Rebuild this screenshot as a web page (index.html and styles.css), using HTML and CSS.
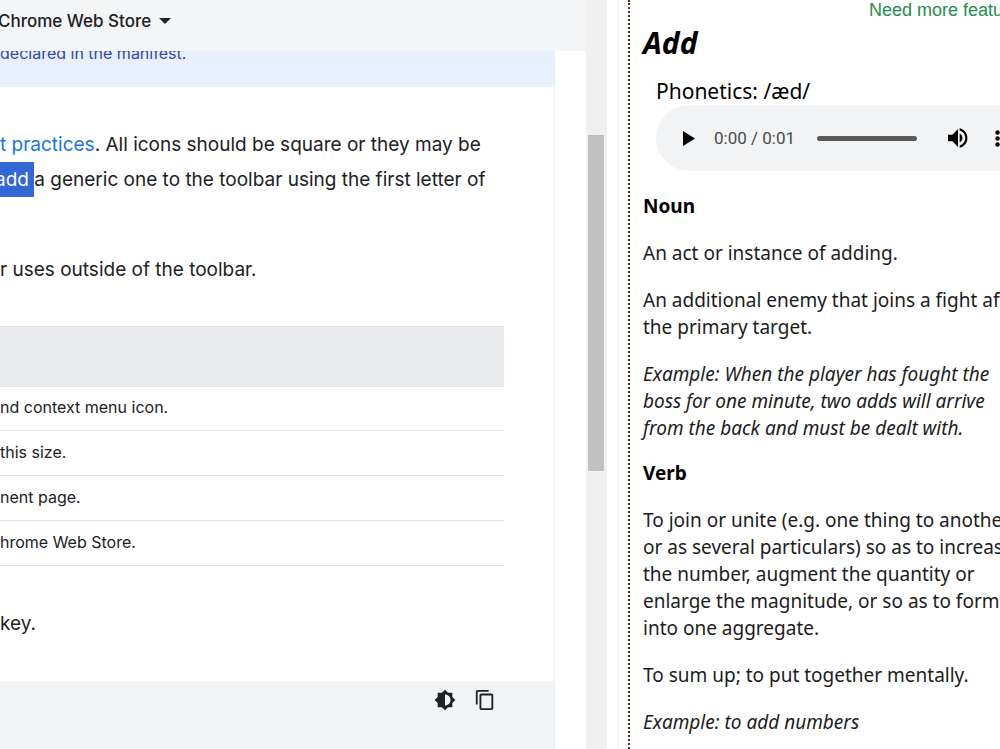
FILE: index.html
```html
<!DOCTYPE html>
<html lang="en">
<head>
<meta charset="utf-8">
<title>Dictionary side panel</title>
<link rel="stylesheet" href="styles.css">
</head>
<body>
<div class="window">
  <div class="browser">
    <nav class="topbar"><button class="menu" type="button">Chrome Web Store
      <svg class="caret" viewBox="0 0 12 6" aria-hidden="true"><path d="M0 0h12L6 6z"/></svg></button></nav>
    <main class="article">
      <p class="note">declared in the manifest.</p>
      <p class="prose"><a href="#practices">t practices</a>. All icons should be square or they may be<br><mark>add </mark>a generic one to the toolbar using the first letter of</p>
      <p class="prose uses">r uses outside of the toolbar.</p>
      <table class="sizes">
        <thead><tr><th scope="col" aria-label="Icon use"></th></tr></thead>
        <tbody>
          <tr><td>nd context menu icon.</td></tr>
          <tr><td>this size.</td></tr>
          <tr><td>nent page.</td></tr>
          <tr><td>hrome Web Store.</td></tr>
        </tbody>
      </table>
      <p class="prose">key.</p>
      <div class="code">
        <button class="tool" type="button" aria-label="Toggle dark code theme"><svg viewBox="0 0 24 24"><path d="M20 15.31 23.31 12 20 8.69V4h-4.69L12 .69 8.69 4H4v4.69L.69 12 4 15.31V20h4.69L12 23.31 15.31 20H20zM12 18V6c3.31 0 6 2.69 6 6s-2.69 6-6 6z"/></svg></button>
        <button class="tool" type="button" aria-label="Copy code sample"><svg viewBox="0 0 24 24"><path d="M16 1H4c-1.100 0-2 .9-2 2v14h2V3h12V1zm3 4H8c-1.100 0-2 .9-2 2v14c0 1.100.9 2 2 2h11c1.100 0 2-.9 2-2V7c0-1.100-.9-2-2-2zm0 16H8V7h11v14z"/></svg></button>
      </div>
    </main>
  </div>
  <div class="scrollbar"><div class="thumb"></div></div>
  <div class="gutter"></div>
  <aside class="panel">
    <a class="more" href="#features">Need more features?</a>
    <h1>Add</h1>
    <div class="sound">
      <p class="phonetics">Phonetics: /æd/</p>
      <div class="player">
        <button class="play" type="button" aria-label="Play"><svg viewBox="0 0 12 15"><path d="M0 0 12 7.500 0 15z"/></svg></button>
        <span class="time">0:00 / 0:01</span>
        <input class="seek" type="range" min="0" max="1" value="0" aria-label="Position">
        <button class="volume" type="button" aria-label="Mute"><svg viewBox="3 3 18 18"><path d="M3 9v6h4l5 5V4L7 9H3zm10.500-1.030v8.050c1.480-.73 2.500-2.250 2.500-4.020s-1.020-3.290-2.500-4.030zM13.500 3.230v2.060c2.890.86 5 3.540 5 6.710s-2.110 5.850-5 6.710v2.060c4.010-.91 7-4.490 7-8.770s-2.990-7.860-7-8.770z"/></svg></button>
        <button class="options" type="button" aria-label="More options"><svg viewBox="0 0 5 17"><circle cx="2.500" cy="2.500" r="2.200"/><circle cx="2.500" cy="8.500" r="2.200"/><circle cx="2.500" cy="14.500" r="2.200"/></svg></button>
      </div>
    </div>
    <section>
      <h2>Noun</h2>
      <p>An act or instance of adding.</p>
      <p>An additional enemy that joins a fight after<br>the primary target.</p>
      <p class="example">Example: When the player has fought the<br>boss for one minute, two adds will arrive<br>from the back and must be dealt with.</p>
    </section>
    <section>
      <h2>Verb</h2>
      <p>To join or unite (e.g. one thing to another,<br>or as several particulars) so as to increase<br>the number, augment the quantity or<br>enlarge the magnitude, or so as to form<br>into one aggregate.</p>
      <p>To sum up; to put together mentally.</p>
      <p class="example">Example: to add numbers</p>
    </section>
  </aside>
</div>
</body>
</html>
```
FILE: styles.css
```css
* { box-sizing: border-box; }
body, p, h1, h2 { margin: 0; }
body { background: #fff; overflow: hidden; }
button { display: flex; align-items: center; border: 0; padding: 0; background: none; color: inherit; font: inherit; flex: none; }
svg { display: block; fill: currentColor; }
a { text-decoration: none; }

.window { display: flex; height: 100vh; overflow: hidden; }

.browser { flex: 1; min-width: 0; overflow: hidden; display: flex; flex-direction: column; font-family: Inter, "Open Sans", sans-serif; color: #202124; white-space: nowrap; }
.topbar { position: relative; z-index: 1; flex: none; padding: 8px 0; background: #f4f5f6; }
.menu { height: 35px; gap: 8px; margin-left: -2px; padding-bottom: 10px; font-size: 17px; font-weight: 500; }
.caret { width: 12px; height: 6px; }

.article { flex: 1; display: flex; flex-direction: column; margin-right: 31px; border-right: 1px solid #e8f0fe; }
.note { flex: none; margin-top: -14px; padding-bottom: 18px; background: #e8f0fe; color: #3348a5; font-size: 16px; line-height: 32px; }
.prose { padding-top: 40px; font-size: 19px; line-height: 35px; }
.prose a { color: #1a73e8; }
.prose mark { display: inline-block; margin-left: -5px; background: #3367d6; color: #fff; white-space: pre; }
.uses { padding: 55px 0 39px; }

.sizes { width: calc(100% - 50px); border-collapse: collapse; font-size: 16px; }
.sizes th { height: 60px; padding: 0; background: #e8eaed; border-top: 1px solid #e0e1e4; }
.sizes td { height: 45px; padding: 0 0 3px; border-bottom: 1px solid #e3e4e6; }
.sizes tbody tr:first-child td { height: 44px; border-top: 1px solid #e0e1e4; }

.code { flex: 1; display: flex; justify-content: flex-end; align-items: flex-start; gap: 18px; margin-top: 40px; padding: 8px 58px 0 0; background: #f1f3f4; }
.tool svg { width: 22px; height: 22px; }

.scrollbar { flex: none; width: 21px; padding: 135px 3px 0 2px; background: #f0f0f0; }
.thumb { height: 336px; background: #c1c1c1; }
.gutter { flex: none; width: 21px; padding-left: 11px; }
.gutter::before { content: ""; display: block; width: 1px; height: 100%; background: #f0f3fd; }

.panel { flex: none; width: 372px; overflow: hidden; padding-left: 13px; border-left: 2px dotted #6e2020; font-family: "Noto Sans", sans-serif; font-size: 19px; line-height: 27px; color: #1c1c1c; white-space: nowrap; }
.more { display: block; height: 20px; margin-left: 226px; color: #1e8e4e; font-family: "Liberation Sans", sans-serif; font-size: 18px; line-height: 20px; }
h1 { padding-top: 3px; color: #000; font-size: 30px; font-style: italic; line-height: 40px; }
.sound { padding: 14px 0 0 13px; color: #000; }
.phonetics { font-size: 21px; line-height: 28px; }
.player { display: flex; align-items: center; width: 400px; height: 66px; padding-left: 27px; border-radius: 33px; background: #f1f3f4; }
.play svg { width: 12px; height: 15px; }
.time { width: 82px; margin: 0 21px 0 19px; color: #4a4a4a; font-family: Roboto, sans-serif; font-size: 17px; }
.seek { appearance: none; width: 100px; height: 5px; margin: 0; border-radius: 3px; background: #5a5a5a; }
.seek::-webkit-slider-thumb { appearance: none; width: 0; height: 0; }
.volume { margin-left: 31px; }
.volume svg { width: 20px; height: 20px; }
.options { margin-left: 27px; }
.options svg { width: 5px; height: 17px; }

section { display: flex; flex-direction: column; gap: 20px; padding-top: 18px; }
.sound + section { padding-top: 22px; }
h2 { color: #000; font-size: 19px; line-height: 27px; }
.example { font-style: italic; }
```
